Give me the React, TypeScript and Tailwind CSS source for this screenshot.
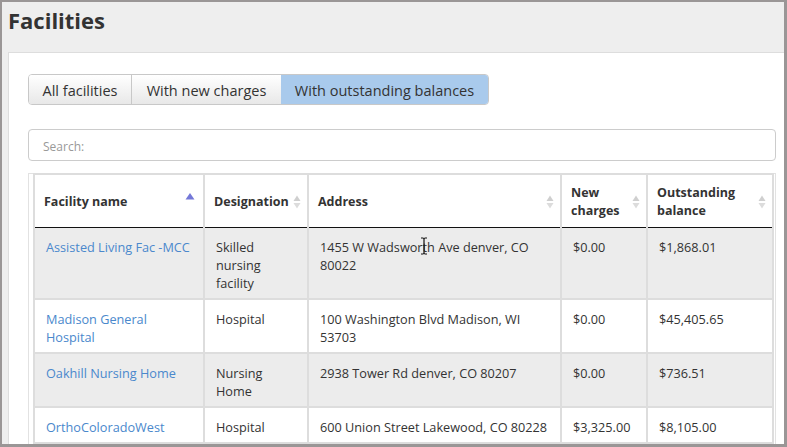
import React from 'react';

type Row = {
  name: string;
  designation: string;
  address: string;
  newCharges: string;
  balance: string;
};

const rows: Row[] = [
  {
    name: 'Assisted Living Fac -MCC',
    designation: 'Skilled nursing facility',
    address: '1455 W Wadsworth Ave denver, CO 80022',
    newCharges: '$0.00',
    balance: '$1,868.01',
  },
  {
    name: 'Madison General Hospital',
    designation: 'Hospital',
    address: '100 Washington Blvd Madison, WI 53703',
    newCharges: '$0.00',
    balance: '$45,405.65',
  },
  {
    name: 'Oakhill Nursing Home',
    designation: 'Nursing Home',
    address: '2938 Tower Rd denver, CO 80207',
    newCharges: '$0.00',
    balance: '$736.51',
  },
  {
    name: 'OrthoColoradoWest',
    designation: 'Hospital',
    address: '600 Union Street Lakewood, CO 80228',
    newCharges: '$3,325.00',
    balance: '$8,105.00',
  },
];

function SortIcon({ asc }: { asc?: boolean }) {
  if (asc) {
    return (
      <svg width="10" height="16" viewBox="0 0 10 16" className="absolute right-[8px] top-[16px]">
        <path d="M5 2 L9.5 8.5 L0.5 8.5 Z" fill="#7478d8" />
      </svg>
    );
  }
  return (
    <svg width="8" height="14" viewBox="0 0 8 14" className="absolute right-[6px] top-1/2 -translate-y-1/2 mt-[1px]">
      <path d="M4 0.5 L7.5 6 L0.5 6 Z" fill="#cfcfcf" />
      <path d="M4 13.5 L7.5 8 L0.5 8 Z" fill="#dcdcdc" />
    </svg>
  );
}

function IBeam() {
  return (
    <svg width="8" height="18" viewBox="0 0 8 18" className="absolute left-[111px] top-[9px]">
      <path d="M1 1 H3 M5 1 H7 M4 1.5 V16.5 M1 17 H3 M5 17 H7" stroke="#111" strokeWidth="1.2" fill="none" />
      <path d="M3 1 Q4 1 4 2 Q4 1 5 1 M3 17 Q4 17 4 16 Q4 17 5 17" stroke="#111" strokeWidth="1" fill="none" />
    </svg>
  );
}

const th = 'relative border-2 border-[#dddddd] border-b border-b-[#111] pl-[9px] pr-[16px] pt-[9px] pb-[7px] text-left align-middle font-bold leading-[18px] text-[12.5px] text-[#333]';
const td = 'border-2 border-[#dddddd] pl-[11px] pr-[9px] pt-[10px] pb-[6px] align-top leading-[18px]';

export default function App() {
  return (
    <div
      className="w-[787px] h-[447px] overflow-hidden bg-[#eeeeee] border-t-2 border-l-2 border-r-[3px] border-b-[3px] border-[#9a9696]"
      style={{ fontFamily: '"Open Sans", "Noto Sans", sans-serif' }}
    >
      <div className="h-[50px] pl-[6px] pt-[3px]">
        <h1 className="text-[22px] leading-[30px] font-bold text-[#333]">Facilities</h1>
      </div>

      <div className="ml-[6px] h-full bg-white border-l border-t border-[#dddddd] pl-[19px] pt-[21px]">
        <div className="flex">
          <div className="flex h-[31px] rounded-[4px] border border-[#c8c8c8] overflow-hidden text-[14.5px] text-[#333]">
            <button className="w-[103px] flex items-center justify-center pt-[2px] bg-gradient-to-b from-white to-[#e8e8e8] border-r border-[#c8c8c8]">
              All facilities
            </button>
            <button className="w-[149px] flex items-center justify-center pt-[2px] bg-gradient-to-b from-white to-[#e8e8e8]">
              With new charges
            </button>
            <button className="w-[207px] flex items-center justify-center pt-[2px] bg-[#a9caec]">
              With outstanding balances
            </button>
          </div>
        </div>

        <div className="mt-[24px] mr-[8px] h-[32px] rounded-[4px] border border-[#cccccc] flex items-center pl-[14px] pt-[3px] text-[12px] text-[#999]">
          Search:
        </div>

        <div className="mt-[12px] mr-[8px] border-l border-t border-r border-[#e2e2e2] pl-[4px] pr-[2px]">
          <table className="w-[739px] -mt-px border-collapse table-fixed text-[12.7px] text-[#333]">
            <colgroup>
              <col className="w-[170px]" />
              <col className="w-[104px]" />
              <col className="w-[253px]" />
              <col className="w-[86px]" />
              <col className="w-[126px]" />
            </colgroup>
            <thead>
              <tr className="bg-white">
                <th className={th}>
                  Facility name
                  <SortIcon asc />
                </th>
                <th className={th}>
                  Designation
                  <SortIcon />
                </th>
                <th className={th}>
                  Address
                  <SortIcon />
                </th>
                <th className={th}>
                  New charges
                  <SortIcon />
                </th>
                <th className={th}>
                  Outstanding balance
                  <SortIcon />
                </th>
              </tr>
            </thead>
            <tbody>
              {rows.map((r, i) => (
                <tr key={r.name} className={i % 2 === 0 ? 'bg-[#ececec]' : 'bg-white'}>
                  <td className={`${td} ${i === 0 ? 'border-t-0' : ''}`}>
                    <a className="text-[#4a88cc]">{r.name}</a>
                  </td>
                  <td className={`${td} ${i === 0 ? 'border-t-0' : ''}`}>{r.designation}</td>
                  <td className={`${td} relative ${i === 0 ? 'border-t-0' : ''}`}>
                    {r.address}
                    {i === 0 && <IBeam />}
                  </td>
                  <td className={`${td} ${i === 0 ? 'border-t-0' : ''}`}>{r.newCharges}</td>
                  <td className={`${td} ${i === 0 ? 'border-t-0' : ''}`}>{r.balance}</td>
                </tr>
              ))}
            </tbody>
          </table>
        </div>
      </div>
    </div>
  );
}
